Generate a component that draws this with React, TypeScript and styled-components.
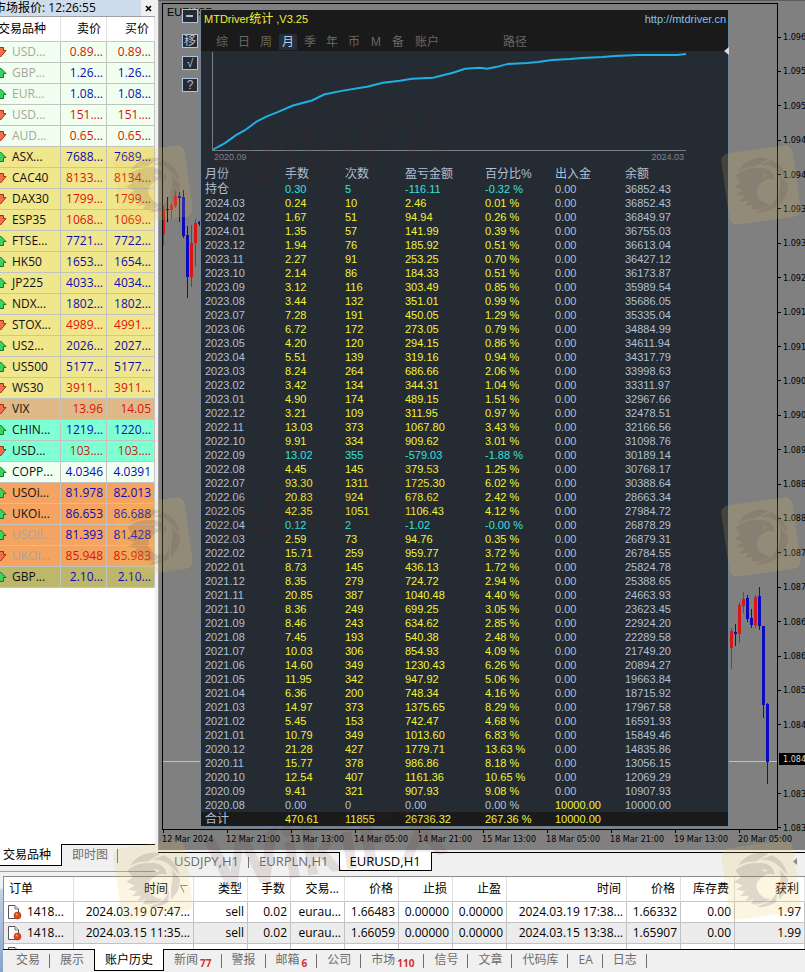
import React from "react";
import styled, { createGlobalStyle, css } from "styled-components";

const UI = `"Open Sans", "Noto Sans CJK SC", sans-serif`;
const PANEL = `"Liberation Sans", "Noto Sans CJK SC", sans-serif`;
const AXIS = `"DejaVu Sans Condensed", "DejaVu Sans", sans-serif`;

const GlobalStyle = createGlobalStyle`
  *, *::before, *::after { box-sizing: border-box; }
  body { margin: 0; background: #f0f0f0; font: 12px/16px ${UI}; color: #000; }
  button { font: inherit; color: inherit; border: 0; background: none; padding: 0; margin: 0; white-space: nowrap; cursor: pointer; }
  table { border-collapse: separate; border-spacing: 0; table-layout: fixed; width: 100%; }
  th, td { padding: 0; font-weight: normal; text-align: left; white-space: nowrap; overflow: hidden; }
`;

/* ---------- data ---------- */

const C = {
  honey: "#f0fff0",
  khaki: "#f0e68c",
  wood: "#deb887",
  aqua: "#7fffd4",
  sand: "#f4a460",
  olive: "#bdb76b",
};

type Quote = [name: string, bid: string, ask: string, up: boolean, bg: string, dim?: boolean];

const quotes: Quote[] = [
  ["USD...", "0.89...", "0.89...", false, C.honey, true],
  ["GBP...", "1.26...", "1.26...", true, C.honey, true],
  ["EUR...", "1.08...", "1.08...", true, C.honey, true],
  ["USD...", "151....", "151....", false, C.honey, true],
  ["AUD...", "0.65...", "0.65...", false, C.honey, true],
  ["ASX...", "7688...", "7689...", true, C.khaki],
  ["CAC40", "8133...", "8134...", false, C.khaki],
  ["DAX30", "1799...", "1799...", false, C.khaki],
  ["ESP35", "1068...", "1069...", false, C.khaki],
  ["FTSE...", "7721...", "7722...", true, C.khaki],
  ["HK50", "1653...", "1654...", true, C.khaki],
  ["JP225", "4033...", "4034...", true, C.khaki],
  ["NDX...", "1802...", "1802...", true, C.khaki],
  ["STOX...", "4989...", "4991...", false, C.khaki],
  ["US2...", "2026...", "2027...", true, C.khaki],
  ["US500", "5177...", "5177...", true, C.khaki],
  ["WS30", "3911...", "3911...", false, C.khaki],
  ["VIX", "13.96", "14.05", false, C.wood],
  ["CHIN...", "1219...", "1220...", true, C.aqua],
  ["USD...", "103....", "103....", false, C.aqua],
  ["COPP...", "4.0346", "4.0391", true, C.honey],
  ["USOi...", "81.978", "82.013", true, C.sand],
  ["UKOi...", "86.653", "86.688", true, C.sand],
  ["USOil...", "81.393", "81.428", true, C.sand, true],
  ["UKOi...", "85.948", "85.983", false, C.sand, true],
  ["GBP...", "2.10...", "2.10...", true, C.olive],
];

const months = `持仓|0.30|5|-116.11|-0.32 %|0.00|36852.43
2024.03|0.24|10|2.46|0.01 %|0.00|36852.43
2024.02|1.67|51|94.94|0.26 %|0.00|36849.97
2024.01|1.35|57|141.99|0.39 %|0.00|36755.03
2023.12|1.94|76|185.92|0.51 %|0.00|36613.04
2023.11|2.27|91|253.25|0.70 %|0.00|36427.12
2023.10|2.14|86|184.33|0.51 %|0.00|36173.87
2023.09|3.12|116|303.49|0.85 %|0.00|35989.54
2023.08|3.44|132|351.01|0.99 %|0.00|35686.05
2023.07|7.28|191|450.05|1.29 %|0.00|35335.04
2023.06|6.72|172|273.05|0.79 %|0.00|34884.99
2023.05|4.20|120|294.15|0.86 %|0.00|34611.94
2023.04|5.51|139|319.16|0.94 %|0.00|34317.79
2023.03|8.24|264|686.66|2.06 %|0.00|33998.63
2023.02|3.42|134|344.31|1.04 %|0.00|33311.97
2023.01|4.90|174|489.15|1.51 %|0.00|32967.66
2022.12|3.21|109|311.95|0.97 %|0.00|32478.51
2022.11|13.03|373|1067.80|3.43 %|0.00|32166.56
2022.10|9.91|334|909.62|3.01 %|0.00|31098.76
2022.09|13.02|355|-579.03|-1.88 %|0.00|30189.14
2022.08|4.45|145|379.53|1.25 %|0.00|30768.17
2022.07|93.30|1311|1725.30|6.02 %|0.00|30388.64
2022.06|20.83|924|678.62|2.42 %|0.00|28663.34
2022.05|42.35|1051|1106.43|4.12 %|0.00|27984.72
2022.04|0.12|2|-1.02|-0.00 %|0.00|26878.29
2022.03|2.59|73|94.76|0.35 %|0.00|26879.31
2022.02|15.71|259|959.77|3.72 %|0.00|26784.55
2022.01|8.73|145|436.13|1.72 %|0.00|25824.78
2021.12|8.35|279|724.72|2.94 %|0.00|25388.65
2021.11|20.85|387|1040.48|4.40 %|0.00|24663.93
2021.10|8.36|249|699.25|3.05 %|0.00|23623.45
2021.09|8.46|243|634.62|2.85 %|0.00|22924.20
2021.08|7.45|193|540.38|2.48 %|0.00|22289.58
2021.07|10.03|306|854.93|4.09 %|0.00|21749.20
2021.06|14.60|349|1230.43|6.26 %|0.00|20894.27
2021.05|11.95|342|947.92|5.06 %|0.00|19663.84
2021.04|6.36|200|748.34|4.16 %|0.00|18715.92
2021.03|14.97|373|1375.65|8.29 %|0.00|17967.58
2021.02|5.45|153|742.47|4.68 %|0.00|16591.93
2021.01|10.79|349|1013.60|6.83 %|0.00|15849.46
2020.12|21.28|427|1779.71|13.63 %|0.00|14835.86
2020.11|15.77|378|986.86|8.18 %|0.00|13056.15
2020.10|12.54|407|1161.36|10.65 %|0.00|12069.29
2020.09|9.41|321|907.93|9.08 %|0.00|10907.93
2020.08|0.00|0|0.00|0.00 %|10000.00|10000.00`
  .split("\n")
  .map((line) => line.split("|"));

const monthHeads = ["月份", "手数", "次数", "盈亏金额", "百分比%", "出入金", "余额"];
const periods = ["综", "日", "周", "月", "季", "年", "币", "M", "备"];

const prices = [
  "1.096", "1.095", "1.095", "1.094", "1.094", "1.093", "1.093", "1.092",
  "1.091", "1.091", "1.090", "1.090", "1.089", "1.088", "1.088", "1.087",
  "1.087", "1.086", "1.086", "1.085", "1.084", "1.084", "1.083", "1.083",
];
const CURRENT_PRICE_INDEX = 21;

const times = [
  "12 Mar 2024", "12 Mar 21:00", "13 Mar 13:00", "14 Mar 05:00", "14 Mar 21:00",
  "15 Mar 13:00", "18 Mar 05:00", "18 Mar 21:00", "19 Mar 13:00", "20 Mar 05:00",
];

const orderHeads = ["订单", "时间", "类型", "手数", "交易...", "价格", "止损", "止盈", "时间", "价格", "库存费", "获利"];
const orderWidths = [70, 120, 54, 43, 54, 54, 54, 54, 120, 54, 54, 70];
const orders = [
  ["1418...", "2024.03.19 07:47...", "sell", "0.02", "eurau...", "1.66483", "0.00000", "0.00000", "2024.03.19 17:38...", "1.66332", "0.00", "1.97"],
  ["1418...", "2024.03.15 11:35...", "sell", "0.02", "eurau...", "1.66059", "0.00000", "0.00000", "2024.03.15 13:38...", "1.65907", "0.00", "1.99"],
];

const terminalTabs: { label: string; count?: string; active?: boolean }[] = [
  { label: "交易" }, { label: "展示" }, { label: "账户历史", active: true },
  { label: "新闻", count: "77" }, { label: "警报" }, { label: "邮箱", count: "6" },
  { label: "公司" }, { label: "市场", count: "110" }, { label: "信号" },
  { label: "文章" }, { label: "代码库" }, { label: "EA" }, { label: "日志" },
];

/* ---------- layout ---------- */

const Page = styled.div`
  position: relative;
  min-height: 100vh;
  display: flex;
  flex-direction: column;
  overflow: hidden;
`;

const Workspace = styled.div`
  flex: 1;
  display: grid;
  grid-template-columns: 158px minmax(0, 1fr);
`;

/* ---------- market watch ---------- */

const Sidebar = styled.aside`
  display: flex;
  flex-direction: column;
  padding: 0 3px 4px 0;
  overflow: hidden;
`;

const SidebarBody = styled.div`
  flex: 1;
  margin-left: -8px;
  background: #fff;
`;

const SidebarTitle = styled.div`
  display: flex;
  justify-content: space-between;
  align-items: center;
  height: 17px;
  background: #f0f0f0;
  border-bottom: 1px solid #a0a0a0;
  white-space: nowrap;
`;

const SidebarName = styled.span`
  flex: 1;
  padding-left: 2px;
  background: #cedceb;
`;

const CloseButton = styled.button`
  width: 14px;
  height: 16px;
  display: grid;
  place-items: center;
`;

const QuoteHead = styled.th`
  height: 25px;
  padding-right: 5px;
  border-right: 1px solid #e2e2e2;
  border-bottom: 1px solid #c8c8c8;
  text-align: right;
  &:first-child { text-align: left; padding-left: 6px; }
`;

const QuoteRow = styled.tr<{ $bg: string }>`
  background: ${(p) => p.$bg};
`;

const quoteCell = css`
  height: 21px;
  border-right: 1px solid #c3c3c0;
  border-bottom: 1px solid #c3c3c0;
`;

const SymbolCell = styled.td<{ $dim?: boolean }>`
  ${quoteCell}
  color: ${(p) => (p.$dim ? "#a6a6a0" : "#111")};
`;

const SymbolLabel = styled.span`
  display: flex;
  align-items: center;
  gap: 5px;
  padding-left: 3px;
`;

const PriceCell = styled.td<{ $up: boolean }>`
  ${quoteCell}
  padding-right: 3px;
  text-align: right;
  color: ${(p) => (p.$up ? "#0c0cb4" : "#dc1408")};
`;

const TabStrip = styled.div<{ $indent?: number }>`
  display: flex;
  height: 22px;
  background: linear-gradient(#000, #000) 0 0 / 100% 1px no-repeat, #f0f0f0;
  padding-left: ${(p) => p.$indent ?? 0}px;
`;

const Tab = styled.button<{ $active?: boolean; $flush?: boolean }>`
  position: relative;
  padding: 0 10px;
  color: #6d6d6d;
  ${(p) =>
    p.$active
      ? css`
          background: #fff;
          color: #000;
          border: solid #000;
          border-width: 0 1px 1px 1px;
        `
      : css`
          &:not(:has(+ [aria-selected="true"]))::after {
            content: "";
            position: absolute;
            right: 0;
            top: 5px;
            bottom: 3px;
            border-right: 1px solid #707070;
          }
        `}
  ${(p) => p.$flush && css`padding-left: 3px; border-left: 0;`}
`;

const SidebarFoot = styled.div`
  height: 28px;
  border-bottom: 1px solid #a0a0a0;
`;

/* ---------- chart ---------- */

const ChartColumn = styled.main`
  display: flex;
  flex-direction: column;
`;

const Chart = styled.section`
  flex: 1;
  display: grid;
  grid-template-columns: minmax(0, 1fr) 27px;
  grid-template-rows: minmax(0, 1fr) 20px;
  padding: 2px 0 0 3px;
  background: #808080;
  border-top: 1px solid #5c5c5c;
  border-left: 1px solid #9a9a9a;
  margin-bottom: 2px;
  overflow: hidden;
  font: 9px/12px ${AXIS};
`;

const Plot = styled.div`
  position: relative;
  display: flex;
  align-items: flex-start;
  padding: 5px 48px 2px 19px;
  border: 1px solid #000;
`;

const PlotCaption = styled.span`
  position: absolute;
  left: 4px;
  top: 2px;
  font: 11px/13px ${PANEL};
`;

const Candles = styled.svg<{ $side: "left" | "right" }>`
  position: absolute;
  top: 0;
  ${(p) => p.$side}: 0;
`;

const PriceLine = styled.div`
  position: absolute;
  left: 0;
  right: 0;
  top: 757px;
  border-top: 1px solid #c0c0c0;
`;

const PriceAxis = styled.div`
  display: flex;
  flex-direction: column;
  justify-content: space-between;
  padding-top: 28px;
  margin-bottom: -4px;
`;

const PriceTick = styled.span<{ $now?: boolean }>`
  display: flex;
  align-items: center;
  padding-left: ${(p) => (p.$now ? 1 : 3)}px;
  margin-left: ${(p) => (p.$now ? 1 : 0)}px;
  white-space: nowrap;
  background: linear-gradient(#000, #000) 0 50% / 3px 1px no-repeat;
  ${(p) => p.$now && css`background: #000; color: #d8d8d8;`}
  &::before { content: ""; flex: none; width: ${(p) => (p.$now ? 3 : 2)}px; }
`;

const TimeAxis = styled.div`
  grid-column: 1 / -1;
  display: flex;
`;

const TimeTick = styled.span`
  flex: 0 0 64px;
  padding-top: 3px;
  white-space: nowrap;
  background: linear-gradient(#000, #000) 1px 0 / 1px 3px no-repeat;
`;

const Controls = styled.div`
  position: relative;
  flex: 0 0 18px;
  display: flex;
  flex-direction: column;
  gap: 8px;
`;

const ControlButton = styled.button<{ $wide?: boolean }>`
  width: 16px;
  height: 14px;
  display: grid;
  place-items: center;
  border: 1px solid #b0c4de;
  background: #242b33;
  color: #b4bfcc;
  font: 12px/12px ${PANEL};
  margin-bottom: ${(p) => (p.$wide ? 3 : 0)}px;
`;

const Stats = styled.section`
  position: relative;
  flex: 1;
  min-width: 0;
  background: #242b33;
  border: 1px solid #6f8499;
  color: #b0c0d6;
  font: 11px/14px ${PANEL};
`;

const StatsHeader = styled.header`
  background: #1a1a1a;
  height: 41px;
`;

const StatsTitle = styled.div`
  display: flex;
  justify-content: space-between;
  padding: 1px 2px 6px 3px;
  line-height: 17px;
  color: #f0f03c;
`;

const CnText = styled.span`
  font-size: 12px;
`;

const StatsLink = styled.a`
  color: #87c0ea;
  text-decoration: none;
`;

const PeriodTabs = styled.nav`
  display: flex;
  gap: 4px;
  padding-left: 12px;
  color: #686868;
`;

const PeriodButton = styled.button<{ $active?: boolean; $gap?: number }>`
  min-width: 18px;
  height: 16px;
  font-size: 12px;
  line-height: 16px;
  margin-left: ${(p) => p.$gap ?? 0}px;
  background: ${(p) => (p.$active ? "#242f3b" : "none")};
  color: ${(p) => (p.$active ? "#b9cce6" : "inherit")};
`;

const Growth = styled.div`
  padding: 1px 42px 0 11px;
  height: 116px;
`;

const GrowthPlot = styled.svg`
  display: block;
  width: 100%;
  height: 99px;
`;

const GrowthDates = styled.div`
  display: flex;
  justify-content: space-between;
  padding: 0 2px;
  font-size: 9px;
  line-height: 13px;
  color: #7b8794;
`;

const PanelHandle = styled.svg`
  position: absolute;
  right: -1px;
  top: 37px;
`;

const StatsHeadCell = styled.th`
  height: 15px;
  font-size: 12px;
  line-height: 15px;
  &:first-child { padding-left: 4px; }
`;

type Tone = "plain" | "gain" | "loss";
const tones: Record<Tone, string> = { plain: "#b0c0d6", gain: "#f2f23a", loss: "#35e0dc" };

const StatsCell = styled.td<{ $tone?: Tone }>`
  height: 14px;
  line-height: 14px;
  color: ${(p) => tones[p.$tone ?? "plain"]};
  &:first-child { padding-left: 4px; }
`;

const TotalRow = styled.tr`
  background: #1a1a1a;
`;

const ChartTabs = styled(TabStrip)`
  justify-content: space-between;
  height: 19px;
  margin-bottom: 5px;
  font-size: 13px;
  line-height: 19px;
`;

const ChartTabGroup = styled.div`
  display: flex;
`;

const ScrollArrow = styled.button`
  width: 20px;
  display: grid;
  place-items: center;
`;

/* ---------- terminal ---------- */

const Terminal = styled.section`
  display: grid;
  grid-template-columns: 3px minmax(0, 1fr);
  grid-template-rows: minmax(0, 1fr);
  height: 96px;
`;

const TerminalEdge = styled.div`
  background: linear-gradient(#eef1f5 0 12px, #c3d2e4 14px, #86a3c9 100%);
`;

const TerminalBody = styled.div`
  display: flex;
  flex-direction: column;
  min-width: 0;
  min-height: 0;
`;

const OrdersClip = styled.div`
  flex: 1;
  min-height: 0;
  overflow: hidden;
  background: #fff;
  border: solid #8c8c8c;
  border-width: 1px 0 0 1px;
`;

const OrderHead = styled.th<{ $left?: boolean }>`
  height: 25px;
  padding: 0 5px;
  text-align: ${(p) => (p.$left ? "left" : "right")};
  border-right: 1px solid #e0e0e0;
  border-bottom: 1px solid #c8c8c8;
`;

const SortMark = styled.svg`
  margin: 0 0 0 12px;
`;

const OrderCell = styled.td<{ $left?: boolean; $shade?: boolean }>`
  height: 21px;
  padding: 0 3px;
  text-align: ${(p) => (p.$left ? "left" : "right")};
  background: ${(p) => (p.$shade ? "#ececec" : "#fff")};
  border-right: 1px solid #c3c3c3;
  border-bottom: 1px solid #c3c3c3;
`;

const OrderId = styled.span`
  display: flex;
  align-items: center;
  gap: 5px;
`;

const TerminalTabs = styled(TabStrip)`
  flex: none;
  height: 23px;
  padding-bottom: 1px;
`;

const Count = styled.sub`
  margin-left: 2px;
  font-size: 10px;
  font-weight: bold;
  line-height: 0;
  color: #d03030;
`;

const WatermarkLayer = styled.svg`
  position: absolute;
  inset: 0;
  width: 100%;
  height: 100%;
  pointer-events: none;
`;

/* ---------- drawings ---------- */

const TrendIcon = ({ up }: { up: boolean }) => (
  <svg width="12" height="12" viewBox="0 0 12 12" aria-hidden="true">
    {up ? (
      <path d="M5.5 1 L11 6.5 H8.5 V10.5 H3 V6.5 H0.5 Z" fill="#3fd060" stroke="#0a7a28" />
    ) : (
      <path d="M3 1.5 H8.5 V4.5 H11 L5.5 11 L0.5 4.5 H3 Z" fill="#f0704a" stroke="#a82c10" />
    )}
  </svg>
);

const OrderIcon = () => (
  <svg width="15" height="16" viewBox="0 0 15 16" aria-hidden="true">
    <path d="M1.5 1.5 H8 L11.5 5 V14.5 H1.5 Z" fill="#fff" stroke="#555" />
    <path d="M8 1.5 V5 H11.5" fill="#ddd" stroke="#777" />
    <circle cx="10.5" cy="11.5" r="3.5" fill="#e04a1c" stroke="#a32c0c" strokeWidth="0.6" />
    <circle cx="9.6" cy="10.4" r="1" fill="#f9a07c" />
  </svg>
);

type Candle = [x: number, high: number, low: number, top: number, bottom: number, color: string];
const R = "#d81818";
const B = "#0a0ac0";

const leftCandles: Candle[] = [
  [0, 206, 246, 209, 234, R],
  [4, 197, 222, 209, 210, "#000"],
  [8, 203, 219, 205, 210, R],
  [12, 191, 208, 196, 206, R],
  [16, 192, 222, 196, 198, B],
  [20, 190, 238, 197, 236, B],
  [24, 226, 298, 235, 277, B],
  [28, 225, 287, 243, 277, R],
  [32, 219, 266, 223, 243, R],
  [36, 221, 226, 222, 224, B],
];

const rightCandles: Candle[] = [
  [2, 628, 669, 631, 648, R],
  [6, 624, 646, 632, 634, B],
  [10, 602, 643, 605, 634, R],
  [14, 592, 613, 599, 606, R],
  [18, 595, 622, 598, 619, B],
  [22, 609, 628, 618, 625, B],
  [26, 595, 628, 597, 625, R],
  [30, 587, 630, 596, 626, B],
  [34, 626, 718, 626, 705, B],
  [38, 703, 784, 704, 762, B],
];

const CandleSet = ({ side, data }: { side: "left" | "right"; data: Candle[] }) => (
  <Candles $side={side} width="48" height="820" viewBox="0 4 48 820" aria-hidden="true" shapeRendering="crispEdges">
    {data.map(([x, high, low, top, bottom, color]) => (
      <g key={x} fill={color}>
        <rect x={x} y={high} width="1" height={low - high} />
        <rect x={x - 1} y={top} width="3" height={bottom - top} />
      </g>
    ))}
  </Candles>
);

const GROWTH =
  "0,99 13,92 24,84 33,79 45,70 55,65 65,61 81,54 100,49 112,43 131,39 155,35 171,31 188,29 200,27 221,26 241,21 253,17 268,16 275,17 285,15 296,12 315,11 326,10 340,8 358,7 370,6 391,5 403,4 425,3 465,3 474,2";

const Eagle = () => (
  <g transform="rotate(-8)">
    <rect x="-36" y="-36" width="72" height="72" rx="8" fill="#ecc44c" fillOpacity="0.17" />
    <g fill="#5a4658" fillOpacity="0.17" fillRule="evenodd">
      <path d="M-21 -17 A27 27 0 0 1 11 -25 L-3 -19 Q-13 -21 -21 -17 Z" />
      <path d="M14 -23 A27 27 0 0 1 27 -1 L19 -12 Q14 -19 2 -20 Z" />
      <path d="M27 3 A27 27 0 0 1 15 22 L17 9 Q21 0 20 -8 Z" />
      <path d="M12 24 A27 27 0 0 1 -8 26 L6 22 Q12 18 15 12 Z" />
      <path d="M-24 -13 C-17 -18 -8 -19 1 -17 C9 -16 15 -11 14 -3 C10 -6 6 -5 2 -3 C-5 0 -7 6 -4 12 C-2 17 2 19 7 20 C0 24 -8 25 -13 22 L-10 18 L-18 19 L-14 14 L-23 13 L-17 9 L-26 6 L-19 3 L-27 -2 L-20 -5 Z M2 -11 L8 -9 L5 -7 Z" />
    </g>
  </g>
);

const Watermarks = () => (
  <WatermarkLayer aria-hidden="true">
    {[185, 537, 880].map((y) => (
      <g key={y}>
        <g transform={`translate(153 ${y})`}><Eagle /></g>
        <g transform={`translate(761 ${y})`}><Eagle /></g>
        <text
          transform={`translate(211 ${y + 11}) rotate(-9)`}
          fontFamily="Lato, sans-serif"
          fontWeight="900"
          fontSize="72"
          fill="#50201c"
          fillOpacity="0.11"
        >
          WikiFX
        </text>
      </g>
    ))}
  </WatermarkLayer>
);

/* ---------- sections ---------- */

const MarketWatch = () => (
  <Sidebar>
    <SidebarBody>
      <SidebarTitle>
        <SidebarName>市场报价: 12:26:55</SidebarName>
        <CloseButton aria-label="关闭">
          <svg width="7" height="7" viewBox="0 0 7 7"><path d="M1 1 L6 6 M6 1 L1 6" stroke="#000" strokeWidth="1.6" /></svg>
        </CloseButton>
      </SidebarTitle>
      <table>
        <colgroup><col width="69" /><col width="46" /><col width="48" /></colgroup>
        <thead>
          <tr>
            <QuoteHead>交易品种</QuoteHead>
            <QuoteHead>卖价</QuoteHead>
            <QuoteHead>买价</QuoteHead>
          </tr>
        </thead>
        <tbody>
          {quotes.map(([name, bid, ask, up, bg, dim], i) => (
            <QuoteRow key={i} $bg={bg}>
              <SymbolCell $dim={dim}><SymbolLabel><TrendIcon up={up} />{name}</SymbolLabel></SymbolCell>
              <PriceCell $up={up}>{bid}</PriceCell>
              <PriceCell $up={up}>{ask}</PriceCell>
            </QuoteRow>
          ))}
        </tbody>
      </table>
    </SidebarBody>
    <SidebarFoot>
      <TabStrip role="tablist">
        <Tab role="tab" aria-selected="true" $active $flush>交易品种</Tab>
        <Tab role="tab" aria-selected="false">即时图</Tab>
      </TabStrip>
    </SidebarFoot>
  </Sidebar>
);

const StatsPanel = () => (
  <Stats>
    <StatsHeader>
      <StatsTitle>
        <span>MTDriver<CnText>统计</CnText> ,V3.25</span>
        <StatsLink href="http://mtdriver.cn">http://mtdriver.cn</StatsLink>
      </StatsTitle>
      <PeriodTabs>
        {periods.map((p) => (
          <PeriodButton key={p} $active={p === "月"}>{p}</PeriodButton>
        ))}
        <PeriodButton $gap={4}>账户</PeriodButton>
        <PeriodButton $gap={60}>路径</PeriodButton>
      </PeriodTabs>
    </StatsHeader>
    <PanelHandle width="5" height="8" viewBox="0 0 5 8" aria-hidden="true">
      <path d="M0 4 L5 0 V8 Z" fill="#d8dde4" />
    </PanelHandle>
    <Growth>
      <GrowthPlot viewBox="0 0 474 100" preserveAspectRatio="none" role="img" aria-label="2020.09 - 2024.03">
        <path d="M0.5 0 V99.5 H474" fill="none" stroke="#7a7f85" vectorEffect="non-scaling-stroke" />
        <polyline points={GROWTH} fill="none" stroke="#1fb0e6" strokeWidth="2" vectorEffect="non-scaling-stroke" />
      </GrowthPlot>
      <GrowthDates><span>2020.09</span><span>2024.03</span></GrowthDates>
    </Growth>
    <table>
      <colgroup>
        <col width="84" /><col width="60" /><col width="60" /><col width="80" />
        <col width="70" /><col width="70" /><col />
      </colgroup>
      <thead>
        <tr>{monthHeads.map((h) => <StatsHeadCell key={h}>{h}</StatsHeadCell>)}</tr>
      </thead>
      <tbody>
        {months.map((row) => {
          const tone: Tone = row[3].startsWith("-") ? "loss" : row[2] === "0" ? "plain" : "gain";
          return (
            <tr key={row[0]}>
              {row.map((v, i) => (
                <StatsCell key={i} $tone={i > 0 && i < 5 ? tone : i === 5 && v !== "0.00" ? "gain" : "plain"}>
                  {i === 0 && v === "持仓" ? <CnText>{v}</CnText> : v}
                </StatsCell>
              ))}
            </tr>
          );
        })}
      </tbody>
      <tfoot>
        <TotalRow>
          <StatsCell><CnText>合计</CnText></StatsCell>
          {["470.61", "11855", "26736.32", "267.36 %", "10000.00"].map((v) => (
            <StatsCell key={v} $tone="gain">{v}</StatsCell>
          ))}
          <StatsCell />
        </TotalRow>
      </tfoot>
    </table>
  </Stats>
);

const ChartPane = () => (
  <ChartColumn>
    <Chart>
      <Plot>
        <PlotCaption>EURUSD</PlotCaption>
        <PriceLine />
        <CandleSet side="left" data={leftCandles} />
        <CandleSet side="right" data={rightCandles} />
        <Controls>
          <ControlButton $wide aria-label="最小化">
            <svg width="10" height="9" viewBox="0 0 10 9"><path d="M1 4 H8" stroke="#fff" strokeWidth="1.4" /></svg>
          </ControlButton>
          <ControlButton>移</ControlButton>
          <ControlButton>√</ControlButton>
          <ControlButton>?</ControlButton>
        </Controls>
        <StatsPanel />
      </Plot>
      <PriceAxis>
        {prices.map((p, i) => (
          <PriceTick key={i} $now={i === CURRENT_PRICE_INDEX}>{p}</PriceTick>
        ))}
      </PriceAxis>
      <TimeAxis>
        {times.map((t) => <TimeTick key={t}>{t}</TimeTick>)}
      </TimeAxis>
    </Chart>
    <ChartTabs $indent={6}>
      <ChartTabGroup role="tablist">
        <Tab role="tab" aria-selected="false">USDJPY,H1</Tab>
        <Tab role="tab" aria-selected="false">EURPLN,H1</Tab>
        <Tab role="tab" aria-selected="true" $active>EURUSD,H1</Tab>
      </ChartTabGroup>
      <ScrollArrow aria-label="向左滚动">
        <svg width="4" height="7" viewBox="0 0 4 7"><path d="M4 0 L0 3.5 L4 7 Z" fill="#8a8a8a" /></svg>
      </ScrollArrow>
    </ChartTabs>
  </ChartColumn>
);

const TerminalPane = () => (
  <Terminal>
    <TerminalEdge />
    <TerminalBody>
      <OrdersClip>
        <table>
          <colgroup>{orderWidths.map((w, i) => <col key={i} width={w} />)}</colgroup>
          <thead>
            <tr>
              {orderHeads.map((h, i) => (
                <OrderHead key={i} $left={i === 0}>
                  {h}
                  {i === 1 && (
                    <SortMark width="8" height="8" viewBox="0 0 8 8" aria-hidden="true">
                      <path d="M7.5 0.5 H0.5 L4 7.5" fill="none" stroke="#808080" />
                    </SortMark>
                  )}
                </OrderHead>
              ))}
            </tr>
          </thead>
          <tbody>
            {orders.map((row, r) => (
              <tr key={r}>
                {row.map((v, i) => (
                  <OrderCell key={i} $left={i === 0} $shade={r === 1}>
                    {i === 0 ? <OrderId><OrderIcon />{v}</OrderId> : v}
                  </OrderCell>
                ))}
              </tr>
            ))}
            <tr>
              {orderHeads.map((_, i) => (
                <OrderCell key={i} $left={i === 0}>{i === 0 && <OrderId><OrderIcon /></OrderId>}</OrderCell>
              ))}
            </tr>
          </tbody>
        </table>
      </OrdersClip>
      <TerminalTabs role="tablist" $indent={3}>
        {terminalTabs.map((t) => (
          <Tab key={t.label} role="tab" aria-selected={!!t.active} $active={t.active}>
            {t.label}{t.count && <Count>{t.count}</Count>}
          </Tab>
        ))}
      </TerminalTabs>
    </TerminalBody>
  </Terminal>
);

export default function App() {
  return (
    <Page>
      <GlobalStyle />
      <Workspace>
        <MarketWatch />
        <ChartPane />
      </Workspace>
      <TerminalPane />
      <Watermarks />
    </Page>
  );
}
